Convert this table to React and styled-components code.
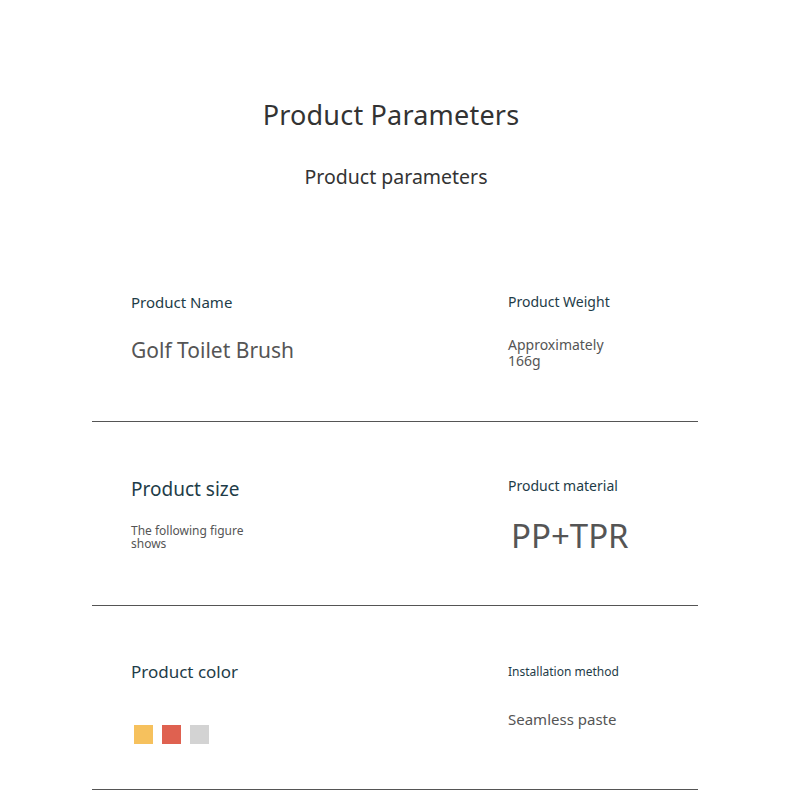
import styled, { createGlobalStyle } from 'styled-components';

const GlobalStyle = createGlobalStyle`
  body {
    margin: 0;
    background: #fff;
    font-family: "Noto Sans", "Open Sans", sans-serif;
  }
`;

const params = [
  {
    left: { label: 'Product Name', labelSize: 15, value: 'Golf Toilet Brush', valueSize: 21, gap: 26 },
    right: { label: 'Product Weight', labelSize: 14, value: 'Approximately\n166g', valueSize: 14, gap: 26 },
  },
  {
    left: { label: 'Product size', labelSize: 19, value: 'The following figure\nshows', valueSize: 12, gap: 22 },
    right: { label: 'Product material', labelSize: 14, value: 'PP+TPR', valueSize: 33, gap: 23, indent: 3 },
  },
  {
    left: { label: 'Product color', labelSize: 17, swatches: ['#f6c15d', '#df6150', '#d3d3d3'], gap: 42 },
    right: { label: 'Installation method', labelSize: 12, value: 'Seamless paste', valueSize: 15, gap: 31, top: 3 },
  },
];

const Cell = ({ item }) => (
  <CellBox $top={item.top || 0}>
    <Label $size={item.labelSize}>{item.label}</Label>
    {item.swatches ? (
      <Swatches $gap={item.gap}>
        {item.swatches.map((c) => <Swatch key={c} $color={c} />)}
      </Swatches>
    ) : (
      <Value $size={item.valueSize} $gap={item.gap} $indent={item.indent || 0}>
        {item.value}
      </Value>
    )}
  </CellBox>
);

const App = () => (
  <Page>
    <GlobalStyle />
    <Header>
      <Title>Product Parameters</Title>
      <Subtitle>Product parameters</Subtitle>
    </Header>
    <Table>
      {params.map((row, i) => (
        <Row key={i}>
          <Cell item={row.left} />
          <Cell item={row.right} />
        </Row>
      ))}
    </Table>
  </Page>
);

const Page = styled.main`
  width: 790px;
  height: 808px;
  overflow: hidden;
`;

const Header = styled.header`
  display: flex;
  flex-direction: column;
  align-items: center;
  padding-top: 96px;
`;

const Title = styled.h1`
  margin: 0 0 0 -8px;
  font-size: 27px;
  font-weight: 400;
  color: #333;
  letter-spacing: 0.2px;
`;

const Subtitle = styled.h2`
  margin: 30px 0 0 2px;
  font-size: 19.5px;
  font-weight: 400;
  color: #333;
`;

const Table = styled.section`
  width: 606px;
  margin: 48px auto 0;
`;

const Row = styled.div`
  display: grid;
  grid-template-columns: 377px 1fr;
  height: 184px;
  padding: 55px 0 0 39px;
  box-sizing: border-box;
  border-bottom: 1px solid #555;
`;

const CellBox = styled.div`
  display: flex;
  flex-direction: column;
  align-items: flex-start;
  padding-top: ${(p) => p.$top}px;
`;

const Label = styled.div`
  font-size: ${(p) => p.$size}px;
  color: #1e3c48;
  line-height: 1.3;
`;

const Value = styled.div`
  margin-top: ${(p) => p.$gap}px;
  margin-left: ${(p) => p.$indent}px;
  font-size: ${(p) => p.$size}px;
  color: #555;
  line-height: 1.1;
  white-space: pre-line;
`;

const Swatches = styled.div`
  display: flex;
  gap: 9px;
  margin-top: ${(p) => p.$gap}px;
  padding-left: 3px;
`;

const Swatch = styled.span`
  width: 19px;
  height: 19px;
  background: ${(p) => p.$color};
`;

export default App;
